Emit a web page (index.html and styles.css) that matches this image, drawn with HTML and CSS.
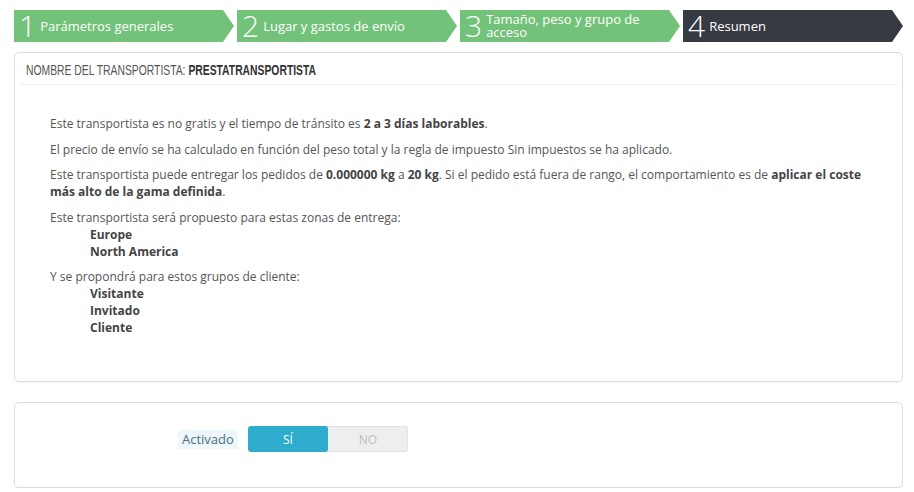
FILE: index.html
```html
<!DOCTYPE html>
<html lang="es">
<head>
<meta charset="utf-8">
<title>Resumen</title>
<link rel="stylesheet" href="styles.css">
</head>
<body>
<div class="page">
  <div class="steps">
    <div class="step done"><span class="num">1</span><span class="label">Parámetros generales</span></div>
    <div class="step done"><span class="num">2</span><span class="label">Lugar y gastos de envío</span></div>
    <div class="step done"><span class="num">3</span><span class="label">Tamaño, peso y grupo de acceso</span></div>
    <div class="step current"><span class="num">4</span><span class="label">Resumen</span></div>
  </div>

  <div class="panel summary">
    <div class="panel-heading"><span class="heading-text">Nombre del transportista: <b>PrestaTransportista</b></span></div>
    <div class="panel-body">
      <p>Este transportista es no gratis y el tiempo de tránsito es <b>2 a 3 días laborables</b>.</p>
      <p>El precio de envío se ha calculado en función del peso total y la regla de impuesto Sin impuestos se ha aplicado.</p>
      <p>Este transportista puede entregar los pedidos de <b>0.000000 kg</b> a <b>20 kg</b>. Si el pedido está fuera de rango, el comportamiento es de <b>aplicar el coste</b> <b>más alto de la gama definida</b>.</p>
      <div class="block">
        <p class="intro">Este transportista será propuesto para estas zonas de entrega:</p>
        <ul class="items">
          <li>Europe</li>
          <li>North America</li>
        </ul>
      </div>
      <div class="block">
        <p class="intro">Y se propondrá para estos grupos de cliente:</p>
        <ul class="items">
          <li>Visitante</li>
          <li>Invitado</li>
          <li>Cliente</li>
        </ul>
      </div>
    </div>
  </div>

  <div class="panel form">
    <div class="form-row">
      <span class="form-label">Activado</span>
      <div class="switch">
        <span class="opt on">SÍ</span>
        <span class="opt off">NO</span>
      </div>
    </div>
  </div>
</div>
</body>
</html>
```

FILE: styles.css
```css
* { box-sizing: border-box; }
html, body { margin: 0; padding: 0; background: #fff; }
body {
  font-family: "Open Sans", "Liberation Sans", sans-serif;
  font-size: 12px;
  color: #555;
}
.page {
  padding: 10px 11px 0 14px;
}
.steps {
  display: flex;
  gap: 3px;
  height: 32px;
}
.step {
  width: 220px;
  height: 32px;
  display: flex;
  align-items: center;
  color: #fff;
  padding-left: 5px;
  clip-path: polygon(0 0, calc(100% - 11px) 0, 100% 50%, calc(100% - 11px) 100%, 0 100%);
}
.step.done { background: #72c279; }
.step.current { background: #363a41; }
.num {
  font-size: 30px;
  font-weight: 300;
  line-height: 32px;
  margin-right: 4px;
  flex: none;
}
.label {
  font-size: 13px;
  line-height: 13px;
  padding-right: 20px;
}

.panel {
  border: 1px solid #dcdcdc;
  border-radius: 5px;
  box-shadow: 0 1px 0 rgba(0,0,0,0.04);
  background: #fff;
}
.summary {
  margin-top: 10px;
  height: 330px;
  padding: 0 5px;
}
.panel-heading {
  height: 32px;
  line-height: 34px;
  padding-left: 6px;
  border-bottom: 1px solid #eee;
  white-space: nowrap;
}
.heading-text {
  display: inline-block;
  font-family: "Liberation Sans", sans-serif;
  font-size: 15px;
  text-transform: uppercase;
  color: #555;
  transform: scaleX(0.69);
  transform-origin: left center;
}
.heading-text b { font-weight: bold; color: #333; }
.panel-body {
  padding: 30px 30px 0 30px;
}
.panel-body p {
  margin: 0 0 8.5px;
  line-height: 17px;
}
.panel-body b { font-weight: 700; color: #444; }
.block .intro { margin-bottom: 0; }
.items {
  list-style: none;
  margin: 0 0 8.5px;
  padding-left: 40px;
  line-height: 17px;
  font-weight: 700;
  color: #444;
}

.form {
  margin-top: 20px;
  height: 86px;
  padding-top: 23px;
}
.form-row {
  display: flex;
  align-items: center;
  padding-left: 163px;
  gap: 10px;
}
.form-label {
  background: #eef7fb;
  border-radius: 2px;
  padding: 1px 4px;
  line-height: 17px;
  font-size: 13px;
  color: #4c6f7f;
}
.switch {
  display: flex;
  width: 160px;
  height: 26px;
  border-radius: 3px;
  overflow: hidden;
  background: #eee;
  box-shadow: inset 0 0 0 1px #e2e2e2;
}
.opt {
  flex: 1;
  display: flex;
  align-items: center;
  justify-content: center;
  font-size: 12px;
}
.opt.on { background: #2eacce; color: #fff; border-radius: 3px; }
.opt.off { color: #bbb; }
```
